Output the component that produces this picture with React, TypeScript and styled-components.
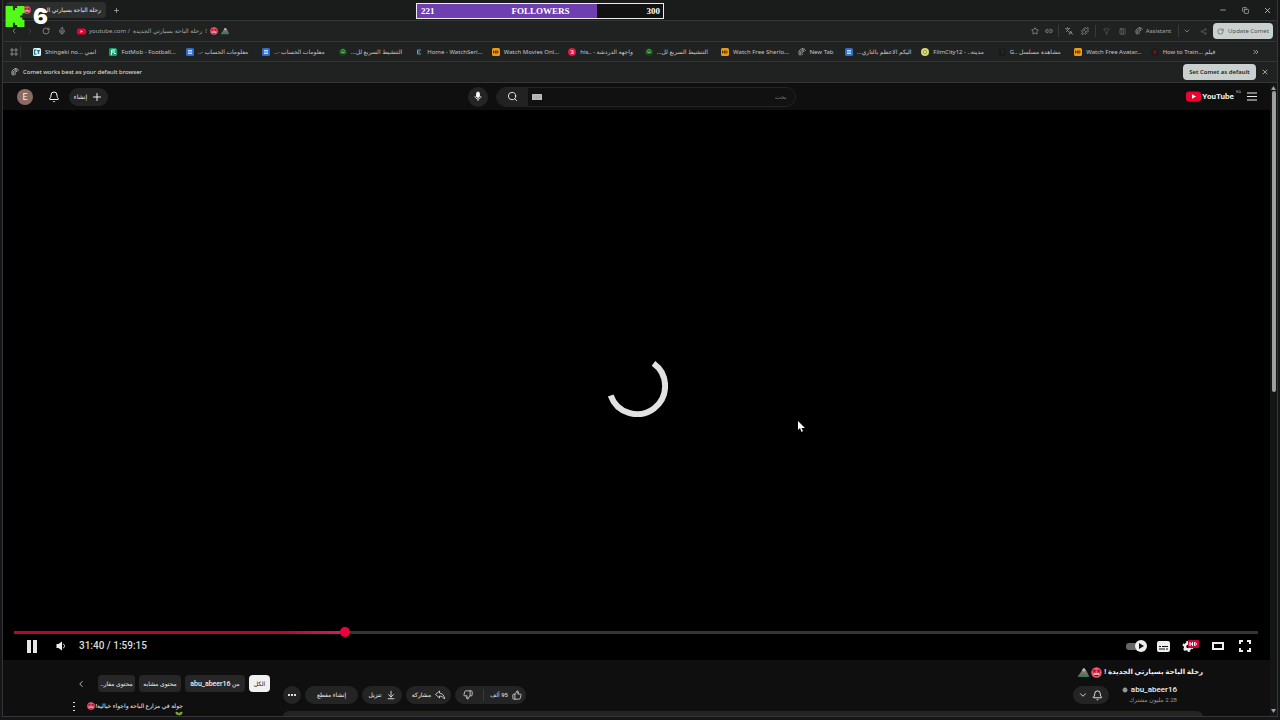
import React from "react";
import styled, { createGlobalStyle, css } from "styled-components";
import {
  ArrowDownToLine, Bell, ChevronDown, ChevronLeft, ChevronRight, ChevronsRight, Columns3, Copy, Link2, Mic, Minus,
  Plus, Puzzle, RotateCw, Search, Star, ThumbsDown, ThumbsUp, X, Languages, Share2, Filter, BadgeCheck,
} from "lucide-react";

const GlobalStyle = createGlobalStyle`
  *, *::before, *::after { box-sizing: border-box; }
  html, body, #root { height: 100%; }
  body {
    margin: 0;
    overflow: hidden;
    background: #16151b;
    color: #d6d8d7;
    font-family: "Noto Sans", "DejaVu Sans", sans-serif;
    font-size: 6px;
    line-height: 10px;
  }
  button, input { font: inherit; color: inherit; }
  a { color: inherit; text-decoration: none; }
  svg { display: block; flex: none; }
`;

const row = css`
  display: flex;
  align-items: center;
`;

const Screen = styled.div`
  position: relative;
  height: 100%;
  padding: 0 2px 3px;
`;

const Window = styled.div`
  height: 100%;
  display: flex;
  flex-direction: column;
  border: 1px solid #343636;
  border-top: 0;
  background: #0f0f0f;
  overflow: hidden;
`;

const PlainButton = styled.button<{ $w?: number }>`
  ${row}
  justify-content: center;
  flex: none;
  width: ${(p) => (p.$w ? p.$w + "px" : "auto")};
  padding: 0;
  border: 0;
  background: none;
  white-space: nowrap;
`;

/* browser chrome */

const TabStrip = styled.div`
  ${row}
  height: 20px;
  flex: none;
  padding-left: 3px;
  background: #1a1c1b;
`;

const Tab = styled.div`
  ${row}
  height: 16px;
  width: 100px;
  padding: 0 5px 0 17px;
  justify-content: space-between;
  border-radius: 4px;
  background: #2d2f2e;
  color: #e4e4e4;
  white-space: nowrap;
  overflow: hidden;
`;

const WindowControls = styled.div`
  ${row}
  margin-left: auto;
`;

const Bar = styled.div`
  ${row}
  height: 21px;
  flex: none;
  border-top: 1px solid #343636;
  background: #202222;
`;

const Toolbar = styled(Bar)`
  padding: 0 4px 0 3px;
  color: #a4a7a6;
`;

const Address = styled.div`
  ${row}
  flex: 1;
  gap: 3px;
  min-width: 0;
  padding-left: 7px;
  white-space: nowrap;
`;

const Divider = styled.i`
  width: 1px;
  height: 12px;
  margin: 0 2px;
  background: #383a3a;
`;

const LightButton = styled(PlainButton)<{ $strong?: boolean }>`
  height: 16px;
  gap: 4px;
  border-radius: 4px;
  background: #c9d0ce;
  color: ${(p) => (p.$strong ? "#1b1e1d" : "#4a5250")};
  font-weight: ${(p) => (p.$strong ? 600 : 400)};
`;

const Bookmarks = styled(Bar)`
  padding: 0 11px 0 6px;
  height: 20px;
`;

const BookmarkList = styled.nav`
  display: flex;
  flex: 1;
  min-width: 0;
  padding: 0 19px 0 10px;
`;

const Bookmark = styled.a<{ $grow: number }>`
  ${row}
  flex: ${(p) => p.$grow} 1 0;
  gap: 4px;
  min-width: 0;
  overflow: hidden;
  white-space: nowrap;
  color: #c3c5c4;
`;

const InfoBar = styled(Bar)`
  padding: 0 7px 0 8px;
  gap: 4px;
  color: #e0e2e1;
`;

const InfoText = styled.span`
  flex: 1;
`;

/* page */

const Viewport = styled.div`
  display: flex;
  flex: 1;
  min-height: 0;
  border-top: 1px solid #343636;
`;

const Page = styled.div`
  display: flex;
  flex-direction: column;
  flex: 1;
  min-width: 0;
  font-family: Roboto, "DejaVu Sans", sans-serif;
`;

const Scrollbar = styled.div`
  display: flex;
  flex-direction: column;
  align-items: center;
  width: 7px;
  padding: 3px 0;
  background: #141515;
`;

const Thumb = styled.div`
  width: 4px;
  height: 48%;
  margin: 1px 0 auto;
  border-radius: 2px;
  background: #9d9f9f;
`;

const Masthead = styled.header`
  display: grid;
  grid-template-columns: 1fr auto 1fr;
  align-items: center;
  height: 27px;
  flex: none;
  padding: 0 13px 0 14px;
  color: #f1f1f1;
`;

const Group = styled.div<{ $end?: boolean }>`
  ${row}
  justify-content: ${(p) => (p.$end ? "flex-end" : "flex-start")};
`;

const Avatar = styled(PlainButton)`
  height: 16px;
  margin-right: 6px;
  border-radius: 50%;
  background: #8b6b61;
  color: #f3eeec;
  font-size: 9px;
`;

const Pill = styled(PlainButton)`
  height: 18px;
  gap: 4px;
  border-radius: 9px;
  background: #242424;
  color: #f1f1f1;
`;

const RoundButton = styled(Pill)`
  height: 20px;
  border-radius: 50%;
`;

const SearchArea = styled.div`
  ${row}
  gap: 8px;
  margin-right: 11px;
`;

const SearchForm = styled.form`
  ${row}
  width: 300px;
  height: 20px;
  border: 1px solid #232323;
  border-radius: 10px;
  overflow: hidden;
  background: #111;
`;

const SearchButton = styled(PlainButton)`
  align-self: stretch;
  background: #222;
`;

const SearchInput = styled.input`
  flex: 1;
  min-width: 0;
  padding: 0 8px;
  border: 0;
  outline: 0;
  background: none;
  &::placeholder { color: #777; opacity: 1; }
`;

const LogoLink = styled.a`
  ${row}
  margin-right: 6px;
`;

const LogoText = styled.span`
  margin-left: 1px;
  font-size: 8px;
  font-weight: 700;
  line-height: 14px;
`;

const Country = styled.sup`
  align-self: flex-start;
  margin-left: 2px;
  color: #999;
  font-size: 4px;
  line-height: 4px;
`;

/* player */

const Player = styled.section`
  display: grid;
  grid-template: 1fr / 1fr;
  flex: 1;
  min-height: 0;
  background: #000;
`;

const Stage = styled.div`
  grid-area: 1 / 1;
  display: grid;
  place-items: center;
  padding-top: 2px;
`;

const PlayerChrome = styled.div`
  grid-area: 1 / 1;
  align-self: end;
  padding: 0 12px 5px 11px;
`;

const Seek = styled.input`
  --played: 26.6%;
  display: block;
  width: 100%;
  height: 10px;
  margin: 0;
  appearance: none;
  background: none;
  &::-webkit-slider-runnable-track {
    height: 3px;
    background:
      linear-gradient(90deg, #b4062f 0 80%, #d01c6c) 0 0 / var(--played) 100% no-repeat,
      #343434;
  }
  &::-webkit-slider-thumb {
    appearance: none;
    width: 10px;
    height: 10px;
    margin-top: -4px;
    border-radius: 50%;
    background: #f3003c;
  }
`;

const Controls = styled.div`
  ${row}
  height: 18px;
  color: #eee;
`;

const Time = styled.span`
  flex: 1;
  margin-left: 7px;
  color: #ddd;
  font-size: 10px;
  font-weight: 500;
  line-height: 12px;
`;

/* below the player */

const Watch = styled.div`
  display: flex;
  height: 56px;
  flex: none;
  gap: 13px;
  padding-right: 67px;
  overflow: hidden;
`;

const Side = styled.aside`
  flex: none;
  width: 267px;
  padding-top: 15px;
`;

const Chips = styled.div`
  ${row}
  justify-content: flex-end;
  gap: 4px;
`;

const Chip = styled(PlainButton)<{ $on?: boolean }>`
  height: 17px;
  border-radius: 4px;
  background: ${(p) => (p.$on ? "#f1f1f1" : "#272727")};
  color: ${(p) => (p.$on ? "#0f0f0f" : "#f1f1f1")};
  font-weight: 500;
`;

const ChipName = styled.b`
  font-size: 7px;
  font-weight: 500;
`;

const Suggestion = styled.div`
  display: flex;
  align-items: flex-start;
  gap: 8px;
  margin-top: 9px;
  padding-left: 68px;
`;

const SuggestionTitle = styled.a`
  display: flex;
  flex-direction: column;
  align-items: flex-end;
  width: 98px;
  color: #f1f1f1;
  font-weight: 500;
  white-space: nowrap;
`;

const SuggestionLine = styled.span`
  ${row}
`;

const Main = styled.main`
  flex: 1;
  min-width: 0;
  padding-top: 7px;
`;

const Title = styled.h1`
  ${row}
  justify-content: flex-end;
  gap: 2px;
  margin: 0 0 8px;
  color: #f1f1f1;
  font-size: 7px;
  line-height: 11px;
`;

const MetaRow = styled.div`
  ${row}
  height: 18px;
  gap: 4px;
`;

const Likes = styled.div`
  ${row}
  height: 18px;
  border-radius: 9px;
  background: #242424;
  font-weight: 500;
`;

const Count = styled.span`
  margin-right: 4px;
`;

const Channel = styled.div`
  display: flex;
  flex-direction: column;
  align-items: flex-end;
  margin: 0 26px 0 9px;
  color: #999;
`;

const ChannelName = styled.a`
  ${row}
  gap: 3px;
  color: #f1f1f1;
  font-size: 8px;
  font-weight: 500;
`;

const Description = styled.div`
  height: 40px;
  margin-top: 7px;
  border-radius: 6px;
  background: #242424;
`;

/* stream overlays */

const Goal = styled.div`
  position: absolute;
  top: 3px;
  left: calc(50% - 224px);
  width: 248px;
  height: 16px;
  display: flex;
  justify-content: space-between;
  align-items: center;
  padding: 0 3px 0 4px;
  border: 1px solid #eee;
  background: linear-gradient(90deg, #6f3fb0 73%, #111 73%);
  color: #fff;
  font: 700 9px/12px "Liberation Serif", serif;
`;

const Viewers = styled.div`
  position: absolute;
  top: 4px;
  left: 5px;
  display: flex;
  align-items: center;
  gap: 8px;
  color: #fff;
  font: 900 22px/24px Inter, sans-serif;
`;

const Pointer = styled.svg`
  position: absolute;
  left: calc(50% + 158px);
  top: 421px;
`;

const StarFace = ({ size = 9 }: { size?: number }) => (
  <svg width={size} height={size} viewBox="0 0 20 20" role="img" aria-label="star-struck">
    <circle cx="10" cy="10" r="9.500" fill="#f2596c" />
    <path d="M6 3l1.300 2.600 2.700.4-2 2 .5 2.800L6 9.500 3.500 10.800 4 8 2 6l2.700-.4zM14 3l1.300 2.600 2.700.4-2 2 .5 2.800-2.500-1.300-2.500 1.300.5-2.800-2-2 2.700-.4z" fill="#b3103a" />
    <path d="M4.500 11.500h11c0 3.500-2.500 5.500-5.500 5.500s-5.500-2-5.500-5.500z" fill="#6d0f28" />
    <path d="M5 11.500h10v2.500H5z" fill="#fff" />
  </svg>
);

const Mountain = ({ size = 9 }: { size?: number }) => (
  <svg width={size} height={size} viewBox="0 0 20 20" role="img" aria-label="mountain">
    <path d="M0 17L6 8l3-5c1-1 3-1 4 1l3 4 4 9z" fill="#7d706c" />
    <path d="M6.500 8L9 3c1-1 3-1 4 1l2 4-2.500-1-2 2-1.500-2z" fill="#b9b3b1" />
    <path d="M0 18c1-5 4-5 6-4 3-2 6-2 8 0 3-1 5 0 6 4z" fill="#3e7c50" />
  </svg>
);

const Leaf = () => (
  <svg width="8" height="8" viewBox="0 0 16 16" role="img" aria-label="seedling">
    <path d="M8 15V8C3 9 1 6 1 2c4-1 7 1 7 5 0-4 3-6 7-5 0 4-2 7-6 6v7z" fill="#7da83a" />
  </svg>
);

const CometIcon = ({ size = 8 }: { size?: number }) => (
  <svg width={size} height={size} viewBox="0 0 16 16" fill="none" stroke="currentColor" strokeWidth="1.500" strokeLinecap="round">
    <path d="M3 14C0 9 2 2 9 1.500M5.500 14C3 9 5 4.500 11 4M8.500 13C6.500 9.500 8 7 12 6.500M9 1.500c3 0 5 1 6 3" />
  </svg>
);

const PlayBadge = ({ w, h }: { w: number; h: number }) => (
  <svg width={w} height={h} viewBox="0 0 30 20">
    <rect width="30" height="20" rx="6" fill="#f0002f" />
    <path d="M12 5.500l8 4.500-8 4.500z" fill="#fff" />
  </svg>
);

const Favicon = ({ kind }: { kind: string }) => {
  if (kind === "comet") return <CometIcon />;
  const tile: Record<string, [string, React.ReactNode]> = {
    docs: ["#2f6fd0", <path key="p" d="M4 5h8M4 8h8M4 11h8" stroke="#fff" strokeWidth="1.500" />],
    hd: ["#ef9a14", <path key="p" d="M3 5v6M7 5v6M3 8h4M9.500 5.500v5c4 0 4-5 0-5" stroke="#3b2500" strokeWidth="1.500" fill="none" />],
    fot: ["#13a068", <path key="p" d="M5 14V4h8M5 8h7M10 11h4" stroke="#fff" strokeWidth="2" fill="none" />],
    anime: ["#e8f1f4", <path key="p" d="M7 4H3v8h4M8 5h6M11 5v7" stroke="#15818e" strokeWidth="2.500" fill="none" />],
  };
  const round: Record<string, [string, React.ReactNode]> = {
    green: ["#173b1b", <path key="p" d="M4 11V7a4 4 0 018 0v4M8 5v7M5 9h6" stroke="#5fd160" strokeWidth="1.500" fill="none" />],
    red: ["#dc1846", <path key="p" d="M5 5l6 1-5 5 6-1" stroke="#fff" strokeWidth="1.500" fill="none" />],
    film: ["#d9d66a", <path key="p" d="M5 8a3 3 0 106 0 3 3 0 00-6 0z" stroke="#6c7030" strokeWidth="1.500" fill="#fffde0" />],
    home: ["#1b252b", <path key="p" d="M12 4H5v8h7M5 8h5" stroke="#8fb4c8" strokeWidth="1.500" fill="none" />],
    dark: ["#1a1b1b", <path key="p" d="M6 4c5-1 6 5 2 8" stroke="#3a3c3c" strokeWidth="1.500" fill="none" />],
    wine: ["#211a1b", <path key="p" d="M5 4l6 4-4 5z" fill="#8d1527" />],
  };
  const isTile = kind in tile;
  const [fill, mark] = isTile ? tile[kind] : round[kind];
  return (
    <svg width="8" height="8" viewBox="0 0 16 16">
      <rect width="16" height="16" rx={isTile ? 3 : 8} fill={fill} />
      {mark}
    </svg>
  );
};

const bookmarks: { icon: string; text: string; grow?: number }[] = [
  { icon: "anime", text: "Shingeki no... انمي" },
  { icon: "fot", text: "FotMob - Football..." },
  { icon: "docs", text: "..- معلومات الحساب" },
  { icon: "docs", text: "..- معلومات الحساب" },
  { icon: "green", text: "...التنشيط السريع لل" },
  { icon: "home", text: "Home - WatchSeri..." },
  { icon: "hd", text: "Watch Movies Onl..." },
  { icon: "red", text: "his.. - واجهة الدردشة" },
  { icon: "green", text: "...التنشيط السريع لل" },
  { icon: "hd", text: "Watch Free Sherlo..." },
  { icon: "comet", text: "New Tab", grow: 47 },
  { icon: "docs", text: "...اليكم الاعظم بالتاري" },
  { icon: "film", text: "FilmCity12 - ..مدينة" },
  { icon: "dark", text: "G.. مشاهدة مسلسل" },
  { icon: "hd", text: "Watch Free Avatar..." },
  { icon: "wine", text: "How to Train... فيلم" },
];

export default function App() {
  return (
    <Screen>
      <GlobalStyle />
      <Window>
        <TabStrip>
          <Tab>
            <StarFace size={8} />
            <span dir="rtl">رحلة الباحة بسيارتي الجد</span>
          </Tab>
          <PlainButton $w={20} aria-label="New tab"><Plus size={7} /></PlainButton>
          <WindowControls>
            <PlainButton $w={23} aria-label="Minimize"><Minus size={8} /></PlainButton>
            <PlainButton $w={23} aria-label="Restore"><Copy size={7} /></PlainButton>
            <PlainButton $w={20} aria-label="Close"><X size={9} /></PlainButton>
          </WindowControls>
        </TabStrip>

        <Toolbar>
          <PlainButton $w={16} aria-label="Back"><ChevronLeft size={8} /></PlainButton>
          <PlainButton $w={16} aria-label="Forward" disabled><ChevronRight size={8} color="#4b4d4d" /></PlainButton>
          <PlainButton $w={16} aria-label="Reload"><RotateCw size={8} /></PlainButton>
          <PlainButton $w={16} aria-label="Voice"><Mic size={8} /></PlainButton>
          <Address>
            <PlayBadge w={9} h={7} />
            <span>youtube.com /</span>
            <span>رحلة الباحة بسيارتي الجديدة</span>
            <span>!</span>
            <StarFace size={8} />
            <Mountain size={8} />
          </Address>
          <PlainButton $w={14} aria-label="Bookmark"><Star size={8} /></PlainButton>
          <PlainButton $w={14} aria-label="Copy link"><Link2 size={8} /></PlainButton>
          <Divider />
          <PlainButton $w={16} aria-label="Translate"><Languages size={8} /></PlainButton>
          <PlainButton $w={16} aria-label="Extensions"><Puzzle size={8} /></PlainButton>
          <Divider />
          <PlainButton $w={16} aria-label="Filter"><Filter size={7} color="#666" /></PlainButton>
          <PlainButton $w={16} aria-label="Panels"><Columns3 size={7} color="#777" /></PlainButton>
          <PlainButton $w={46}><CometIcon size={8} /><span>&nbsp;&nbsp;Assistant</span></PlainButton>
          <Divider />
          <PlainButton $w={12} aria-label="More"><ChevronDown size={8} /></PlainButton>
          <PlainButton $w={20} aria-label="Profile"><Share2 size={7} color="#666" /></PlainButton>
          <LightButton $w={60}><RotateCw size={7} />Update Comet</LightButton>
        </Toolbar>

        <Bookmarks>
          <PlainButton $w={9} aria-label="All apps">
            <svg width="8" height="8" viewBox="0 0 16 16" fill="none" stroke="#9b9d9d" strokeWidth="1.500">
              <path d="M2 2h4v4H2zM10 2h4v4h-4zM2 10h4v4H2zM10 10h4v4h-4z" />
            </svg>
          </PlainButton>
          <Divider />
          <BookmarkList>
            {bookmarks.map((b, i) => (
              <Bookmark key={i} href="#" $grow={b.grow || 76}>
                <Favicon kind={b.icon} />
                <span>{b.text}</span>
              </Bookmark>
            ))}
          </BookmarkList>
          <PlainButton $w={20} aria-label="More bookmarks"><ChevronsRight size={8} /></PlainButton>
        </Bookmarks>

        <InfoBar>
          <CometIcon size={8} />
          <InfoText>Comet works best as your default browser</InfoText>
          <LightButton $w={73} $strong>Set Comet as default</LightButton>
          <PlainButton $w={10} aria-label="Dismiss"><X size={8} /></PlainButton>
        </InfoBar>

        <Viewport>
          <Page>
            <Masthead>
              <Group>
                <Avatar $w={16}>E</Avatar>
                <PlainButton $w={30} aria-label="Notifications"><Bell size={12} strokeWidth={2} /></PlainButton>
                <Pill $w={39}>إنشاء<Plus size={12} strokeWidth={2} /></Pill>
              </Group>
              <SearchArea>
                <RoundButton $w={20} aria-label="Search by voice">
                  <svg width="10" height="11" viewBox="0 0 20 22" fill="none" stroke="#fff" strokeWidth="1.500">
                    <rect x="7" y="2" width="6" height="11" rx="3" fill="#fff" />
                    <path d="M4 10c0 8 12 8 12 0M10 16v4" />
                  </svg>
                </RoundButton>
                <SearchForm onSubmit={(e) => e.preventDefault()}>
                  <SearchButton $w={31} aria-label="Search"><Search size={11} strokeWidth={2} /></SearchButton>
                  <PlainButton $w={18} type="button" aria-label="Keyboard">
                    <svg width="10" height="6" viewBox="0 0 20 12">
                      <rect width="20" height="12" rx="1" fill="#bdbdbd" />
                      <path d="M2 4h16M2 7h16M5 10h10" stroke="#888" strokeDasharray="2 1" />
                    </svg>
                  </PlainButton>
                  <SearchInput dir="rtl" placeholder="بحث" aria-label="بحث" />
                </SearchForm>
              </SearchArea>
              <Group $end>
                <LogoLink href="#">
                  <PlayBadge w={15} h={11} />
                  <LogoText>YouTube</LogoText>
                  <Country>BA</Country>
                </LogoLink>
                <PlainButton $w={10} aria-label="Menu">
                  <svg width="10" height="9" viewBox="0 0 10 9" stroke="#eee"><path d="M0 1h10M0 4.500h10M0 8h10" /></svg>
                </PlainButton>
              </Group>
            </Masthead>

            <Player>
              <Stage>
                <svg width="62" height="62" viewBox="0 0 62 62" role="img" aria-label="Loading">
                  <path d="M47.500 8.400A28 28 0 1 1 4.700 40.400" fill="none" stroke="#e2e2e2" strokeWidth="6" />
                </svg>
              </Stage>
              <PlayerChrome>
                <Seek type="range" min={0} max={7155} defaultValue={1890} aria-label="Seek" />
                <Controls>
                  <PlainButton $w={36} aria-label="Pause">
                    <svg width="10" height="13" viewBox="0 0 10 13" fill="#e6e6e6"><path d="M0 0h4v13H0zM6 0h4v13H6z" /></svg>
                  </PlainButton>
                  <PlainButton $w={22} aria-label="Mute">
                    <svg width="10" height="10" viewBox="0 0 20 20" fill="#eee">
                      <path d="M1 6h4l7-5v18l-7-5H1z" /><path d="M14 6c4 1 4 7 0 8" fill="none" stroke="#eee" strokeWidth="2" />
                    </svg>
                  </PlainButton>
                  <Time>31:40 / 1:59:15</Time>
                  <PlainButton $w={27} aria-label="Autoplay">
                    <svg width="21" height="12" viewBox="0 0 21 12">
                      <rect y="3" width="16" height="7" rx="3" fill="#666" /><circle cx="15" cy="6" r="6" fill="#eee" />
                      <path d="M13 3l5 3-5 3z" fill="#111" />
                    </svg>
                  </PlainButton>
                  <PlainButton $w={27} aria-label="Subtitles">
                    <svg width="13" height="11" viewBox="0 0 13 11">
                      <rect width="13" height="11" rx="2" fill="#eee" />
                      <path d="M2 5.500h2M5 5.500h6M2 8h6M9 8h2" stroke="#111" strokeWidth="1" />
                    </svg>
                  </PlainButton>
                  <PlainButton $w={27} aria-label="Settings">
                    <svg width="17" height="12" viewBox="0 0 17 12">
                      <circle cx="6" cy="6.500" r="3" fill="none" stroke="#eee" strokeWidth="2.500" />
                      <circle cx="6" cy="6.500" r="4.500" fill="none" stroke="#eee" strokeWidth="2" strokeDasharray="2.400 2.312" />
                      <rect x="6" width="11" height="8" rx="1" fill="#c4093c" />
                      <path d="M8 2v4M10.500 2v4M8 4h2.500M12.500 2.500v3c2.500 0 2.500-3 0-3" fill="none" stroke="#fff" strokeWidth="1" />
                    </svg>
                  </PlainButton>
                  <PlainButton $w={27} aria-label="Theater mode">
                    <svg width="12" height="8" viewBox="0 0 12 8"><path d="M1 1h10v6H1z" fill="none" stroke="#eee" strokeWidth="2" /></svg>
                  </PlainButton>
                  <PlainButton $w={27} aria-label="Full screen">
                    <svg width="12" height="12" viewBox="0 0 12 12" fill="none" stroke="#eee" strokeWidth="2">
                      <path d="M1 4V1h3M8 1h3v3M11 8v3H8M4 11H1V8" />
                    </svg>
                  </PlainButton>
                </Controls>
              </PlayerChrome>
            </Player>

            <Watch>
              <Side>
                <Chips>
                  <PlainButton $w={26} aria-label="Next"><ChevronLeft size={10} /></PlainButton>
                  <Chip $w={37}>..محتوى مقار</Chip>
                  <Chip $w={42}>محتوى مشابه</Chip>
                  <Chip $w={60}><ChipName>abu_abeer16</ChipName>&nbsp;من</Chip>
                  <Chip $w={21} $on>الكل</Chip>
                </Chips>
                <Suggestion>
                  <PlainButton $w={6} aria-label="Options">
                    <svg width="2" height="10" viewBox="0 0 2 10" fill="#ddd"><path d="M0 1h2v1H0zM0 5h2v1H0zM0 9h2v1H0z" /></svg>
                  </PlainButton>
                  <SuggestionTitle href="#">
                    <SuggestionLine>
                      <StarFace size={8} />
                      <span dir="rtl">جولة في مزارع الباحة واجواء خيالية!</span>
                    </SuggestionLine>
                    <Leaf />
                  </SuggestionTitle>
                </Suggestion>
              </Side>
              <Main>
                <Title>
                  <Mountain size={11} />
                  <StarFace size={11} />
                  <span dir="rtl">رحلة الباحة بسيارتي الجديدة !</span>
                </Title>
                <MetaRow>
                  <Pill $w={18} aria-label="More actions">
                    <svg width="8" height="2" viewBox="0 0 8 2" fill="#ddd"><path d="M0 0h2v2H0zM3 0h2v2H3zM6 0h2v2H6z" /></svg>
                  </Pill>
                  <Pill $w={53}>إنشاء مقطع</Pill>
                  <Pill $w={40}>تنزيل<ArrowDownToLine size={10} strokeWidth={2} /></Pill>
                  <Pill $w={45}>
                    مشاركة
                    <svg width="10" height="10" viewBox="0 0 20 20" fill="none" stroke="currentColor" strokeWidth="1.500">
                      <path d="M9 2L1 9l8 7v-4c4 0 7 2 10 6 0-7-4-11-10-12z" />
                    </svg>
                  </Pill>
                  <Likes>
                    <PlainButton $w={26} aria-label="Dislike"><ThumbsDown size={10} strokeWidth={2} /></PlainButton>
                    <Divider />
                    <PlainButton $w={40}><Count dir="rtl">95 ألف</Count><ThumbsUp size={10} strokeWidth={2} /></PlainButton>
                  </Likes>
                  <InfoText />
                  <Pill $w={36} aria-label="Subscribed"><ChevronDown size={10} strokeWidth={2} /><Bell size={11} strokeWidth={2} /></Pill>
                  <Channel>
                    <ChannelName href="#"><BadgeCheck size={6} fill="#aaa" color="#444" />abu_abeer16</ChannelName>
                    <span dir="rtl">2.28 مليون مشترك</span>
                  </Channel>
                </MetaRow>
                <Description />
              </Main>
            </Watch>
          </Page>
          <Scrollbar>
            <svg width="5" height="4" viewBox="0 0 5 4" fill="#9d9f9f"><path d="M2.500 0L5 4H0z" /></svg>
            <Thumb />
            <svg width="5" height="4" viewBox="0 0 5 4" fill="#9d9f9f"><path d="M2.500 4L5 0H0z" /></svg>
          </Scrollbar>
        </Viewport>
      </Window>

      <Goal><span>221</span><span>FOLLOWERS</span><span>300</span></Goal>
      <Viewers>
        <svg width="20" height="21" viewBox="0 0 18 20" fill="#53fc18">
          <path d="M0 0h7v4h2V2h2V0h7v7h-2v2h-2v2h2v2h2v7h-7v-2H9v-2H7v4H0z" />
        </svg>
        <span>6</span>
      </Viewers>
      <Pointer width="7" height="11" viewBox="0 0 7 11"><path d="M0 0v9l2-2 1.500 4 1.500-1-1.500-3H7z" fill="#fff" /></Pointer>
    </Screen>
  );
}
